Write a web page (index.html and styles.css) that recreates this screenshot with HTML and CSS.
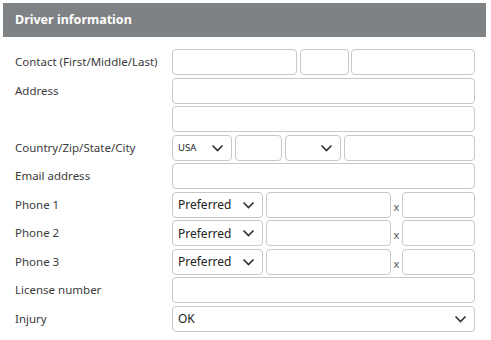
FILE: index.html
```html
<!DOCTYPE html>
<html dir="ltr" lang="en">
<head>
	<meta charset="UTF-8">
	<meta name="viewport" content="width=device-width">
	<title>Driver information</title>
	<link rel="stylesheet" href="styles.css">
</head>
<body>
<div class="panel-head">Driver information</div>

<div class="form">
	<label class="lbl">Contact (First/Middle/Last)</label>
	<div class="ctl contact">
		<input type="text" class="box" />
		<input type="text" class="box" />
		<input type="text" class="box" />
	</div>

	<label class="lbl">Address</label>
	<div class="ctl"><input type="text" class="box" /></div>

	<span class="lbl"></span>
	<div class="ctl"><input type="text" class="box" /></div>

	<label class="lbl">Country/Zip/State/City</label>
	<div class="ctl place">
		<div class="sel small"><span>USA</span><svg class="chev" viewBox="0 0 12 8"><path d="M1 1.5l5 5 5-5" /></svg></div>
		<input type="text" class="box" />
		<div class="sel"><span></span><svg class="chev" viewBox="0 0 12 8"><path d="M1 1.5l5 5 5-5" /></svg></div>
		<input type="text" class="box" />
	</div>

	<label class="lbl">Email address</label>
	<div class="ctl"><input type="text" class="box" /></div>

	<label class="lbl">Phone 1</label>
	<div class="ctl phone">
		<div class="sel"><span>Preferred</span><svg class="chev" viewBox="0 0 12 8"><path d="M1 1.5l5 5 5-5" /></svg></div>
		<input type="text" class="box" />
		<span class="ext">x</span>
		<input type="text" class="box" />
	</div>

	<label class="lbl">Phone 2</label>
	<div class="ctl phone">
		<div class="sel"><span>Preferred</span><svg class="chev" viewBox="0 0 12 8"><path d="M1 1.5l5 5 5-5" /></svg></div>
		<input type="text" class="box" />
		<span class="ext">x</span>
		<input type="text" class="box" />
	</div>

	<label class="lbl">Phone 3</label>
	<div class="ctl phone">
		<div class="sel"><span>Preferred</span><svg class="chev" viewBox="0 0 12 8"><path d="M1 1.5l5 5 5-5" /></svg></div>
		<input type="text" class="box" />
		<span class="ext">x</span>
		<input type="text" class="box" />
	</div>

	<label class="lbl">License number</label>
	<div class="ctl"><input type="text" class="box" /></div>

	<label class="lbl">Injury</label>
	<div class="ctl">
		<div class="sel wide"><span>OK</span><svg class="chev" viewBox="0 0 12 8"><path d="M1 1.5l5 5 5-5" /></svg></div>
	</div>
</div>
</body>
</html>
```

FILE: styles.css
```css
html { height: 100%; }

body {
	margin: 0;
	padding: 3px;
	font-size: 11.5px;
	font-family: "Noto Sans", "Open Sans", sans-serif;
	color: #3b3b3b;
	background: #fff;
}

.panel-head {
	background-color: #7f8284;
	color: #fff;
	font-weight: bold;
	font-size: 12.5px;
	height: 34px;
	line-height: 34px;
	padding-left: 12px;
	width: 471px;
}

.form {
	display: grid;
	grid-template-columns: 157px 303px;
	row-gap: 2.5px;
	padding: 12px 0 0 12px;
}

.lbl {
	line-height: 26px;
	height: 26px;
	white-space: nowrap;
}

.ctl {
	display: flex;
	gap: 2.5px;
	height: 26px;
}

.box {
	box-sizing: border-box;
	width: 100%;
	height: 26px;
	border: 1px solid #c8c8c8;
	border-radius: 4px;
	margin: 0;
	padding: 0 6px;
	font: inherit;
	background: #fff;
}

.contact .box:nth-child(1) { width: 125px; flex: none; }
.contact .box:nth-child(2) { width: 49px; flex: none; }
.contact .box:nth-child(3) { flex: 1; }

.sel {
	box-sizing: border-box;
	height: 26px;
	border: 1px solid #c8c8c8;
	border-radius: 4px;
	display: flex;
	align-items: center;
	justify-content: space-between;
	padding: 0 7px 0 5px;
	color: #222;
	font-size: 12px;
	background: #fff;
	flex: none;
}

.chev {
	width: 13px;
	height: 8px;
	fill: none;
	stroke: #333;
	stroke-width: 1.7;
}

.place { gap: 3px; }
.place .small { width: 60px; font-size: 9.5px; }
.place .box:nth-of-type(1) { width: 47px; flex: none; }
.place .sel:nth-of-type(2) { width: 56px; }
.place .box:nth-of-type(2) { flex: 1; }

.phone .sel { width: 91px; }
.phone .box:nth-of-type(1) { width: 125px; flex: none; margin-left: 0.5px; }
.phone .box:nth-of-type(2) { flex: 1; }
.ext {
	width: 6px;
	line-height: 30px;
	font-size: 11px;
	color: #555;
	text-align: center;
}

.wide { width: 100%; flex: 1; }
```
